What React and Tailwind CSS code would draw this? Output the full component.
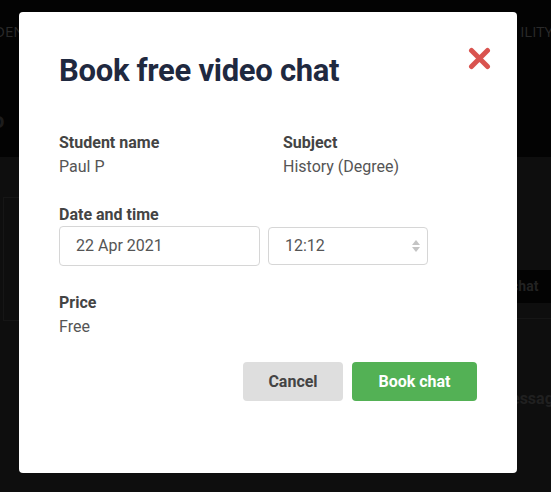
import React from "react";

export default function App() {
  return (
    <div className="relative w-[551px] h-[492px] overflow-hidden bg-[#0e0e0e]" style={{ fontFamily: "Roboto, 'Liberation Sans', sans-serif" }}>
      {/* dimmed background page */}
      <div className="flex flex-col">
        <div className="h-[157px] bg-[#030303] relative">
          <div className="flex justify-between items-center pt-[20px] text-[15px] text-[#2a2a2a]" style={{ fontFamily: "'Open Sans', sans-serif" }}>
            <span className="-ml-[6px]">DEN</span>
            <span className="-mr-[2px]">ILITY</span>
          </div>
          <div className="absolute left-[-8px] top-[104px] text-[22px] font-bold text-[#1c1c1c]">o</div>
        </div>
        <div className="flex justify-between">
          <div className="mt-[40px] ml-[3px] w-[40px] h-[124px] border border-[#161616]"></div>
          <div className="flex flex-col w-[40px]">
            <div className="mt-[113px] h-[33px] bg-[#030303] text-[#222] font-bold text-[14px] flex items-center">chat</div>
            <div className="h-[16px] border-b border-[#161616]"></div>
            <div className="mt-[68px] text-[#202020] font-bold text-[16px]">essage</div>
          </div>
        </div>
      </div>

      {/* modal */}
      <div className="absolute left-[19px] top-[12px] w-[498px] h-[461px] bg-white rounded-[4px] px-[40px] pt-[40px]">
        <button className="absolute right-[26px] top-[35px] w-[23px] h-[23px]">
          <svg viewBox="0 0 23 23" width="23" height="23">
            <path d="M3.5 3.5 L19.5 19.5 M19.5 3.5 L3.5 19.5" stroke="#d9534f" strokeWidth="5" strokeLinecap="round" />
          </svg>
        </button>
        <h1 className="text-[31px] leading-[38px] font-bold text-[#1f2940] tracking-[-0.3px]">Book free video chat</h1>

        <div className="flex mt-[43px]">
          <div className="w-[224px]">
            <div className="text-[16px] leading-[20px] font-bold text-[#444]">Student name</div>
            <div className="text-[16px] leading-[20px] text-[#555] mt-[4px]">Paul P</div>
          </div>
          <div>
            <div className="text-[16px] leading-[20px] font-bold text-[#444]">Subject</div>
            <div className="text-[16px] leading-[20px] text-[#555] mt-[4px]">History (Degree)</div>
          </div>
        </div>

        <div className="mt-[28px] text-[16px] leading-[20px] font-bold text-[#444]">Date and time</div>
        <div className="flex items-center gap-[8px] mt-[1px]">
          <div className="w-[201px] h-[40px] border border-[#d6d6d6] rounded-[4px] flex items-center pl-[16px] text-[16px] text-[#555]">22 Apr 2021</div>
          <div className="w-[160px] h-[38px] border border-[#d6d6d6] rounded-[4px] flex items-center justify-between pl-[16px] pr-[6px] text-[16px] text-[#555]">
            <span>12:12</span>
            <svg width="10" height="16" viewBox="0 0 10 16">
              <path d="M1 7 L5 2 L9 7 Z" fill="#c4c4c4" />
              <path d="M1 9 L5 14 L9 9 Z" fill="#c4c4c4" />
            </svg>
          </div>
        </div>

        <div className="mt-[27px] text-[16px] leading-[20px] font-bold text-[#444]">Price</div>
        <div className="text-[16px] leading-[20px] text-[#555] mt-[4px]">Free</div>

        <div className="flex justify-end gap-[9px] mt-[25px]">
          <button className="w-[100px] h-[39px] rounded-[4px] bg-[#dedede] text-[#444] font-bold text-[16px]">Cancel</button>
          <button className="w-[125px] h-[39px] rounded-[4px] bg-[#53b155] text-white font-bold text-[16px]">Book chat</button>
        </div>
      </div>
    </div>
  );
}
